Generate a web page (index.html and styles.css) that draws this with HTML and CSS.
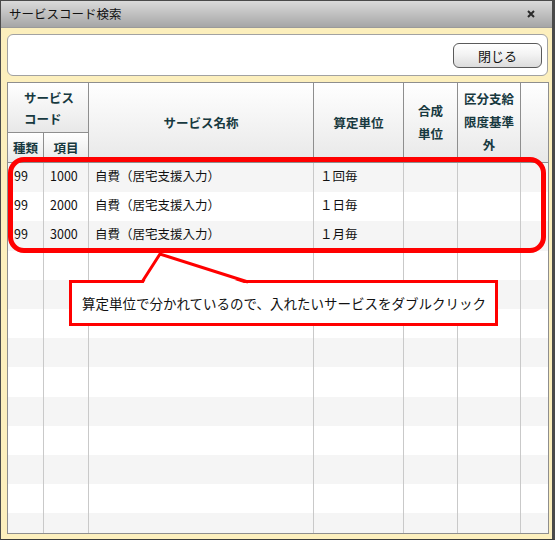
FILE: index.html
```html
<!DOCTYPE html>
<html lang="ja">
<head>
<meta charset="utf-8">
<title>サービスコード検索</title>
<link rel="stylesheet" href="styles.css">
</head>
<body>
<div class="window">
  <div class="titlebar">
    <span class="title">サービスコード検索</span>
    <svg class="close" width="8" height="8" viewBox="0 0 8 8"><path d="M1 1L7 7M7 1L1 7" stroke="#2a2a2a" stroke-width="2"/></svg>
  </div>
  <div class="content">
    <div class="toolbar">
      <button class="btn">閉じる</button>
    </div>
    <div class="table">
      <div class="head">
        <div class="hc code"><div class="stack">サービス<br>コード</div></div>
        <div class="hc tall c3">サービス名称</div>
        <div class="hc tall c4">算定単位</div>
        <div class="hc tall c5 lh23">合成<br>単位</div>
        <div class="hc tall c6 lh23">区分支給<br>限度基準<br>外</div>
        <div class="hc tall c7 last"></div>
        <div class="hc sub s1">種類</div>
        <div class="hc sub s2">項目</div>
      </div>
      <div class="body">
        <div class="row"><div class="cell">99</div><div class="cell">1000</div><div class="cell">自費（居宅支援入力）</div><div class="cell">１回毎</div><div class="cell"></div><div class="cell"></div><div class="cell last"></div></div>
        <div class="row"><div class="cell">99</div><div class="cell">2000</div><div class="cell">自費（居宅支援入力）</div><div class="cell">１日毎</div><div class="cell"></div><div class="cell"></div><div class="cell last"></div></div>
        <div class="row"><div class="cell">99</div><div class="cell">3000</div><div class="cell">自費（居宅支援入力）</div><div class="cell">１月毎</div><div class="cell"></div><div class="cell"></div><div class="cell last"></div></div>
        <div class="row"><div class="cell"></div><div class="cell"></div><div class="cell"></div><div class="cell"></div><div class="cell"></div><div class="cell"></div><div class="cell last"></div></div>
        <div class="row"><div class="cell"></div><div class="cell"></div><div class="cell"></div><div class="cell"></div><div class="cell"></div><div class="cell"></div><div class="cell last"></div></div>
        <div class="row"><div class="cell"></div><div class="cell"></div><div class="cell"></div><div class="cell"></div><div class="cell"></div><div class="cell"></div><div class="cell last"></div></div>
        <div class="row"><div class="cell"></div><div class="cell"></div><div class="cell"></div><div class="cell"></div><div class="cell"></div><div class="cell"></div><div class="cell last"></div></div>
        <div class="row"><div class="cell"></div><div class="cell"></div><div class="cell"></div><div class="cell"></div><div class="cell"></div><div class="cell"></div><div class="cell last"></div></div>
        <div class="row"><div class="cell"></div><div class="cell"></div><div class="cell"></div><div class="cell"></div><div class="cell"></div><div class="cell"></div><div class="cell last"></div></div>
        <div class="row"><div class="cell"></div><div class="cell"></div><div class="cell"></div><div class="cell"></div><div class="cell"></div><div class="cell"></div><div class="cell last"></div></div>
        <div class="row"><div class="cell"></div><div class="cell"></div><div class="cell"></div><div class="cell"></div><div class="cell"></div><div class="cell"></div><div class="cell last"></div></div>
        <div class="row"><div class="cell"></div><div class="cell"></div><div class="cell"></div><div class="cell"></div><div class="cell"></div><div class="cell"></div><div class="cell last"></div></div>
        <div class="row"><div class="cell"></div><div class="cell"></div><div class="cell"></div><div class="cell"></div><div class="cell"></div><div class="cell"></div><div class="cell last"></div></div>
      </div>
    </div>
  </div>
  <div class="highlight"></div>
  <div class="callout">算定単位で分かれているので、入れたいサービスをダブルクリック</div>
  <svg class="wedge" width="555" height="540" viewBox="0 0 555 540">
    <polygon points="143,284 160,255.5 247,284" fill="#fff"/>
    <polyline points="142,282 160,254 248,282" fill="none" stroke="#ff0000" stroke-width="3" stroke-linejoin="miter"/>
  </svg>
</div>
</body>
</html>
```

FILE: styles.css
```css
* { box-sizing: border-box; }
html, body { margin: 0; padding: 0; }
body {
  width: 555px;
  height: 540px;
  overflow: hidden;
  font-family: "Noto Sans CJK JP", "Noto Sans", sans-serif;
  background: #fff;
}
.window {
  position: relative;
  width: 555px;
  height: 540px;
  border-top: 1px solid #4a4a4a;
  border-left: 1px solid #4a4a4a;
  border-right: 3px solid #4a4a4a;
  border-bottom: 1px solid #3a3a3a;
  overflow: hidden;
  display: flex;
  flex-direction: column;
}
.titlebar {
  height: 27px;
  flex: none;
  background: linear-gradient(#dadada, #a6a6a6);
  display: flex;
  align-items: center;
  justify-content: space-between;
  padding: 0 17px 0 8px;
  border-bottom: 1px solid #9a9a9a;
}
.title {
  font-size: 12.5px;
  color: #111;
  line-height: 1;
}
.close { display: block; margin-top: -1px; }
.content {
  flex: 1;
  min-height: 0;
  background: #fcefbd;
  padding: 6px 0 5px 6px;
  display: flex;
  flex-direction: column;
}
.toolbar {
  width: 541px;
  height: 42px;
  flex: none;
  background: #fff;
  border: 1px solid #a2a2a2;
  border-radius: 6px;
  display: flex;
  justify-content: flex-end;
  align-items: center;
  padding-right: 5px;
  margin-bottom: 6px;
}
.btn {
  width: 89px;
  height: 25px;
  margin-top: 1px;
  border: 1px solid #5a5a5a;
  border-radius: 6px;
  background: linear-gradient(#ffffff, #f3f3f3 45%, #dcdcdc);
  font-family: inherit;
  font-size: 13px;
  color: #111;
  padding: 0;
  line-height: 1;
}
.table {
  width: 542px;
  flex: 1;
  min-height: 0;
  border: 1px solid #8e8e8e;
  background: #fff;
  overflow: hidden;
  display: flex;
  flex-direction: column;
}
.head {
  flex: none;
  display: grid;
  grid-template-columns: 36px 45px 225px 90px 54px 63px 27px;
  grid-template-rows: 50px 30px;
}
.hc {
  background: linear-gradient(#ffffff, #e8e8e8);
  border-right: 1px solid #8e8e8e;
  border-bottom: 1px solid #8e8e8e;
  display: flex;
  align-items: center;
  justify-content: center;
  text-align: center;
  font-size: 12.5px;
  font-weight: bold;
  color: #17393f;
  line-height: 21px;
}
.hc.last { border-right: none; }
.code { grid-column: 1 / 3; grid-row: 1; }
.stack { text-align: left; padding-left: 2px; }
.tall { grid-row: 1 / 3; }
.c3 { grid-column: 3; }
.c4 { grid-column: 4; }
.c5 { grid-column: 5; }
.c6 { grid-column: 6; }
.c7 { grid-column: 7; }
.lh23 { line-height: 23px; padding-bottom: 2px; }
.sub { grid-row: 2; }
.s1 { grid-column: 1; }
.s2 { grid-column: 2; }
.body {
  flex: 1;
  min-height: 0;
  overflow: hidden;
}
.row {
  height: 29.2px;
  display: grid;
  grid-template-columns: 36px 45px 225px 90px 54px 63px 27px;
}
.row:nth-child(odd) { background: #f5f5f5; }
.cell {
  border-right: 1px solid #c9c9c9;
  display: flex;
  align-items: center;
  padding: 0 0 4px 6px;
  font-size: 12.5px;
  color: #111;
  white-space: nowrap;
  overflow: hidden;
}
.cell.last { border-right: none; }
.highlight {
  position: absolute;
  left: 7px;
  top: 156px;
  width: 538px;
  height: 96px;
  border: 5px solid #ff0000;
  border-radius: 16px;
  pointer-events: none;
}
.callout {
  position: absolute;
  left: 68px;
  top: 279px;
  width: 429px;
  height: 46px;
  border: 3px solid #ff0000;
  background: #fff;
  display: flex;
  align-items: center;
  padding-left: 10px;
  font-size: 13.5px;
  color: #111;
  white-space: nowrap;
}
.wedge {
  position: absolute;
  left: -1px;
  top: -1px;
  pointer-events: none;
}
```
